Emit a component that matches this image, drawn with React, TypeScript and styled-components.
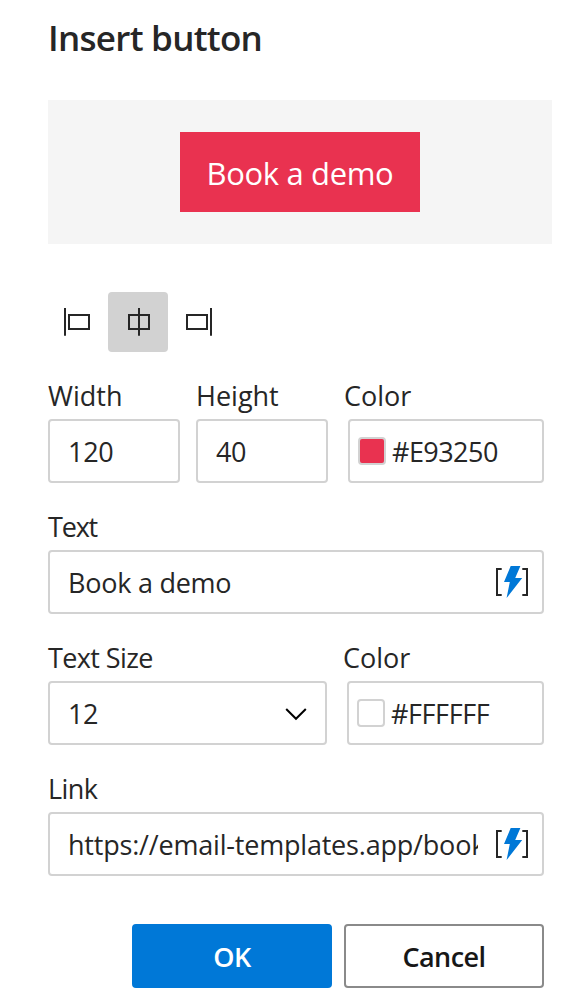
import React from "react";
import styled, { createGlobalStyle } from "styled-components";

const GlobalStyle = createGlobalStyle`
  * { box-sizing: border-box; }
  body { margin: 0; background: #ffffff; }
  body, button, input {
    font-family: "Open Sans", "Noto Sans", sans-serif;
    color: #262626;
  }
`;

const Dialog = styled.main`
  width: 588px;
  height: 1000px;
  padding: 0 36px 0 48px;
  display: flex;
  flex-direction: column;
  overflow: hidden;
  background: #ffffff;
`;

const Title = styled.h1`
  margin: 0;
  height: 100px;
  padding-top: 13px;
  font-size: 35px;
  font-weight: 600;
  line-height: 50px;
  letter-spacing: -0.72px;
`;

const Preview = styled.section`
  height: 144px;
  flex: none;
  display: flex;
  align-items: center;
  justify-content: center;
  background: #f5f5f5;
`;

const DemoButton = styled.div`
  width: 240px;
  height: 80px;
  background: #e93250;
  color: #ffffff;
  font-size: 31px;
  line-height: 83px;
  letter-spacing: -0.35px;
  text-align: center;
  white-space: nowrap;
`;

const AlignBar = styled.div`
  display: flex;
  margin: 48px 0 21px;
`;

const AlignButton = styled.button<{ $active?: boolean }>`
  width: 60px;
  height: 60px;
  padding: 0;
  border: 0;
  border-radius: 4px;
  background: ${(p) => (p.$active ? "#d2d2d2" : "transparent")};
  svg { display: block; }
`;

const Form = styled.div`
  width: 496px;
  display: flex;
  flex-direction: column;
  gap: 21px;
`;

const Row = styled.div`
  display: flex;
`;

const Field = styled.div<{ $width: number; $gap?: number }>`
  width: ${(p) => p.$width}px;
  margin-right: ${(p) => p.$gap ?? 0}px;
  display: flex;
  flex-direction: column;
`;

const Label = styled.label<{ $spacing?: number }>`
  height: 46px;
  font-size: 27px;
  line-height: 45px;
  letter-spacing: ${(p) => p.$spacing ?? 0}px;
  white-space: nowrap;
`;

const Box = styled.div<{ $inset?: number; $pad?: number; $end?: number }>`
  height: 64px;
  margin-left: ${(p) => p.$inset ?? 0}px;
  padding: 0 ${(p) => p.$end ?? 12}px 0 ${(p) => p.$pad ?? 18}px;
  display: flex;
  align-items: center;
  border: 2px solid #d2d2d2;
  border-radius: 4px;
  background: #ffffff;
`;

const Input = styled.input<{ $spacing?: number }>`
  flex: 1;
  min-width: 0;
  height: 60px;
  padding: 0;
  border: 0;
  outline: 0;
  background: transparent;
  font-size: 27px;
  letter-spacing: ${(p) => p.$spacing ?? 0}px;
`;

const Swatch = styled.span<{ $color: string }>`
  flex: none;
  width: 28px;
  height: 28px;
  margin-right: 6px;
  border: 2px solid #d2d2d2;
  border-radius: 4px;
  background: ${(p) => p.$color};
`;

const IconSlot = styled.span`
  flex: none;
  display: flex;
  margin-left: 16px;
`;

const Actions = styled.footer`
  width: 496px;
  margin-top: 48px;
  display: flex;
  justify-content: flex-end;
  gap: 12px;
`;

const ActionButton = styled.button<{ $primary?: boolean }>`
  width: 200px;
  height: 64px;
  padding: 1px 0 0;
  border: 2px solid ${(p) => (p.$primary ? "#0078d7" : "#8a8a8a")};
  border-radius: 4px;
  background: ${(p) => (p.$primary ? "#0078d7" : "#ffffff")};
  color: ${(p) => (p.$primary ? "#ffffff" : "#171717")};
  font-size: 27px;
  font-weight: 600;
  letter-spacing: -0.55px;
`;

const AlignIcon = ({ line, box }: { line: number; box: number }) => (
  <svg width="60" height="60" fill="none" stroke="#262626" strokeWidth="2">
    <rect x={box + 1} y="23" width="20" height="14" />
    <path d={`M${line} 16V43.7`} />
  </svg>
);

const TokenIcon = () => (
  <IconSlot>
    <svg width="36" height="36" viewBox="0 0 36 36" fill="none">
      <path d="M7.7 5H3V31H7.7M28.3 5H33V31H28.3" stroke="#262626" strokeWidth="2" />
      <path d="M16.7 2H26.4L21.2 14H28.2L12.6 34L15.8 18H10Z" fill="#0078d7" />
    </svg>
  </IconSlot>
);

export default function App() {
  return (
    <>
      <GlobalStyle />
      <Dialog>
        <Title>Insert button</Title>
        <Preview>
          <DemoButton>Book a demo</DemoButton>
        </Preview>
        <AlignBar>
          <AlignButton aria-label="Align left">
            <AlignIcon line={17} box={20} />
          </AlignButton>
          <AlignButton aria-label="Align center" $active>
            <AlignIcon line={31} box={20} />
          </AlignButton>
          <AlignButton aria-label="Align right">
            <AlignIcon line={43} box={18} />
          </AlignButton>
        </AlignBar>
        <Form>
          <Row>
            <Field $width={132} $gap={16}>
              <Label>Width</Label>
              <Box><Input defaultValue="120" $spacing={-0.3} /></Box>
            </Field>
            <Field $width={132} $gap={16}>
              <Label>Height</Label>
              <Box><Input defaultValue="40" $spacing={-0.5} /></Box>
            </Field>
            <Field $width={200}>
              <Label>Color</Label>
              <Box $inset={4} $pad={8}>
                <Swatch $color="#e93250" />
                <Input defaultValue="#E93250" $spacing={-0.55} />
              </Box>
            </Field>
          </Row>
          <Field $width={496}>
            <Label $spacing={-1.2}>Text</Label>
            <Box>
              <Input defaultValue="Book a demo" $spacing={-0.25} />
              <TokenIcon />
            </Box>
          </Field>
          <Row>
            <Field $width={279} $gap={16}>
              <Label $spacing={-0.6}>Text Size</Label>
              <Box $end={16}>
                <Input defaultValue="12" readOnly $spacing={-0.5} />
                <svg width="24" height="16" viewBox="0 0 24 16" fill="none" stroke="#000000" strokeWidth="2">
                  <path d="M1.2 4L11 13.8L20.8 4" />
                </svg>
              </Box>
            </Field>
            <Field $width={201}>
              <Label>Color</Label>
              <Box $inset={4} $pad={8}>
                <Swatch $color="#ffffff" />
                <Input defaultValue="#FFFFFF" $spacing={-0.4} />
              </Box>
            </Field>
          </Row>
          <Field $width={496}>
            <Label $spacing={-0.6}>Link</Label>
            <Box>
              <Input defaultValue="https://email-templates.app/book-a-demo" $spacing={-0.2} />
              <TokenIcon />
            </Box>
          </Field>
        </Form>
        <Actions>
          <ActionButton $primary>OK</ActionButton>
          <ActionButton>Cancel</ActionButton>
        </Actions>
      </Dialog>
    </>
  );
}
